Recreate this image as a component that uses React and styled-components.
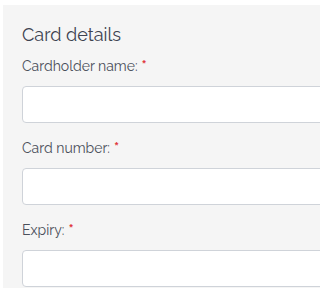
import React from "react";
import styled, { createGlobalStyle } from "styled-components";

const Global = createGlobalStyle`
  html, body { margin: 0; padding: 0; background: #ffffff; overflow: hidden; }
  body { font-family: "Raleway", Lato, "Open Sans", sans-serif; }
`;

const Panel = styled.form`
  margin: 5px 0 0 3px;
  height: 283px;
  overflow: hidden;
  background: #f5f5f5;
  padding: 18px 0 0 19px;
  box-sizing: border-box;
  display: flex;
  flex-direction: column;
`;

const Heading = styled.h2`
  margin: 0 0 10px;
  font-size: 18px;
  line-height: 24px;
  font-weight: 400;
  color: #3d4350;
  white-space: nowrap;
`;

const Field = styled.div`
  display: flex;
  flex-direction: column;
  gap: 10px;
  margin-bottom: 16px;
  flex-shrink: 0;
`;

const Label = styled.label`
  font-size: 14px;
  line-height: 19px;
  color: #4a4f5a;
  white-space: nowrap;
`;

const Required = styled.span`
  color: #e0393e;
  font-size: 15px;
  font-weight: 700;
  margin-left: 4px;
`;

const Input = styled.input`
  box-sizing: border-box;
  width: calc(100% + 40px);
  height: 37px;
  border: 1px solid #cfd3d9;
  border-radius: 4px;
  background: #ffffff;
  padding: 0 10px;
  font: inherit;
  outline: none;
`;

const fields = ["Cardholder name:", "Card number:", "Expiry:"];

export default function App() {
  return (
    <>
      <Global />
      <Panel>
        <Heading>Card details</Heading>
        {fields.map((f) => (
          <Field key={f}>
            <Label>
              {f}
              <Required>*</Required>
            </Label>
            <Input type="text" />
          </Field>
        ))}
      </Panel>
    </>
  );
}
